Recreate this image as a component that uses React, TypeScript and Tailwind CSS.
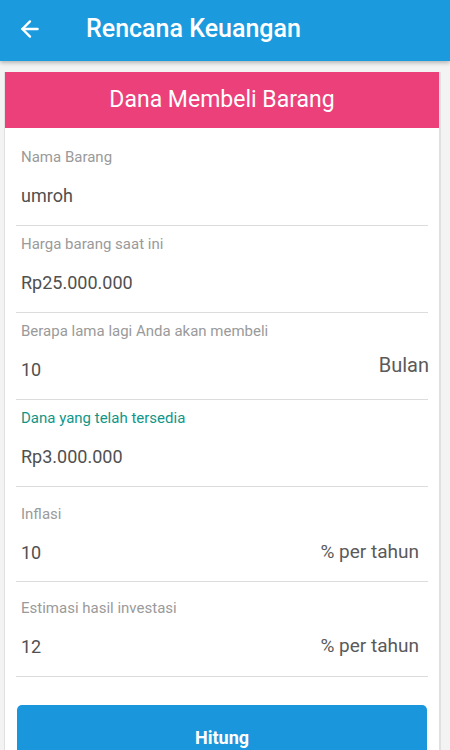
import { ArrowLeft } from "lucide-react";

interface Field {
  label: string;
  value: string;
  suffix?: string;
  active?: boolean;
  pt: string;
  pb: string;
}

const fields: Field[] = [
  { label: "Nama Barang", value: "umroh", pt: "pt-[19px]", pb: "pb-[18px]" },
  { label: "Harga barang saat ini", value: "Rp25.000.000", pt: "pt-[8px]", pb: "pb-[18px]" },
  { label: "Berapa lama lagi Anda akan membeli", value: "10", suffix: "Bulan", pt: "pt-[8px]", pb: "pb-[18px]" },
  { label: "Dana yang telah tersedia", value: "Rp3.000.000", active: true, pt: "pt-[8px]", pb: "pb-[18px]" },
  { label: "Inflasi", value: "10", suffix: "% per tahun", pt: "pt-[17px]", pb: "pb-[17px]" },
  { label: "Estimasi hasil investasi", value: "12", suffix: "% per tahun", pt: "pt-[16px]", pb: "pb-[18px]" },
];

export default function App() {
  return (
    <div className="h-[750px] w-[450px] overflow-hidden bg-[#f3f3f3] font-['Roboto',sans-serif]">
      <header className="relative z-10 flex h-[61px] items-center bg-[#1c9ade] shadow-[0_2px_4px_rgba(0,0,0,0.25)]">
        <ArrowLeft className="ml-[17px] -mt-[4px] h-[26px] w-[26px] text-white" strokeWidth={2.2} />
        <h1 className="ml-[43px] -mt-[4px] text-[25px] font-medium text-white">Rencana Keuangan</h1>
      </header>

      <div className="ml-[4px] mt-[11px] w-[437px] border-l border-r-2 border-[#e0e0e0] bg-white">
        <div className="flex h-[56px] items-center justify-center bg-[#ec407a]">
          <span className="text-[23px] text-white">Dana Membeli Barang</span>
        </div>

        {fields.map((f) => (
          <div key={f.label} className="px-[11px]">
            <div className={`${f.pt} ${f.pb} px-[5px]`}>
              <div
                className={`text-[15px] leading-[20px] ${f.active ? "text-[#109688]" : "text-[#9a9a9a]"}`}
              >
                {f.label}
              </div>
              <div className="mt-[16px] flex h-[24px] items-center justify-between">
                <span className="text-[18px] text-[#505050]">{f.value}</span>
                {f.suffix === "Bulan" && (
                  <span className="-mr-[6px] -mt-[8px] text-[20px] text-[#5a5a5a]">{f.suffix}</span>
                )}
                {f.suffix && f.suffix !== "Bulan" && (
                  <span className="mr-[4px] text-[19px] text-[#5a5a5a]">{f.suffix}</span>
                )}
              </div>
            </div>
            <div className="h-px bg-[#dcdcdc]" />
          </div>
        ))}

        <div className="px-[12px] pt-[28px]">
          <button className="flex h-[64px] w-full items-center justify-center rounded-[5px] bg-[#1a96dc] text-[18px] font-bold text-white">
            Hitung
          </button>
        </div>
      </div>
    </div>
  );
}
